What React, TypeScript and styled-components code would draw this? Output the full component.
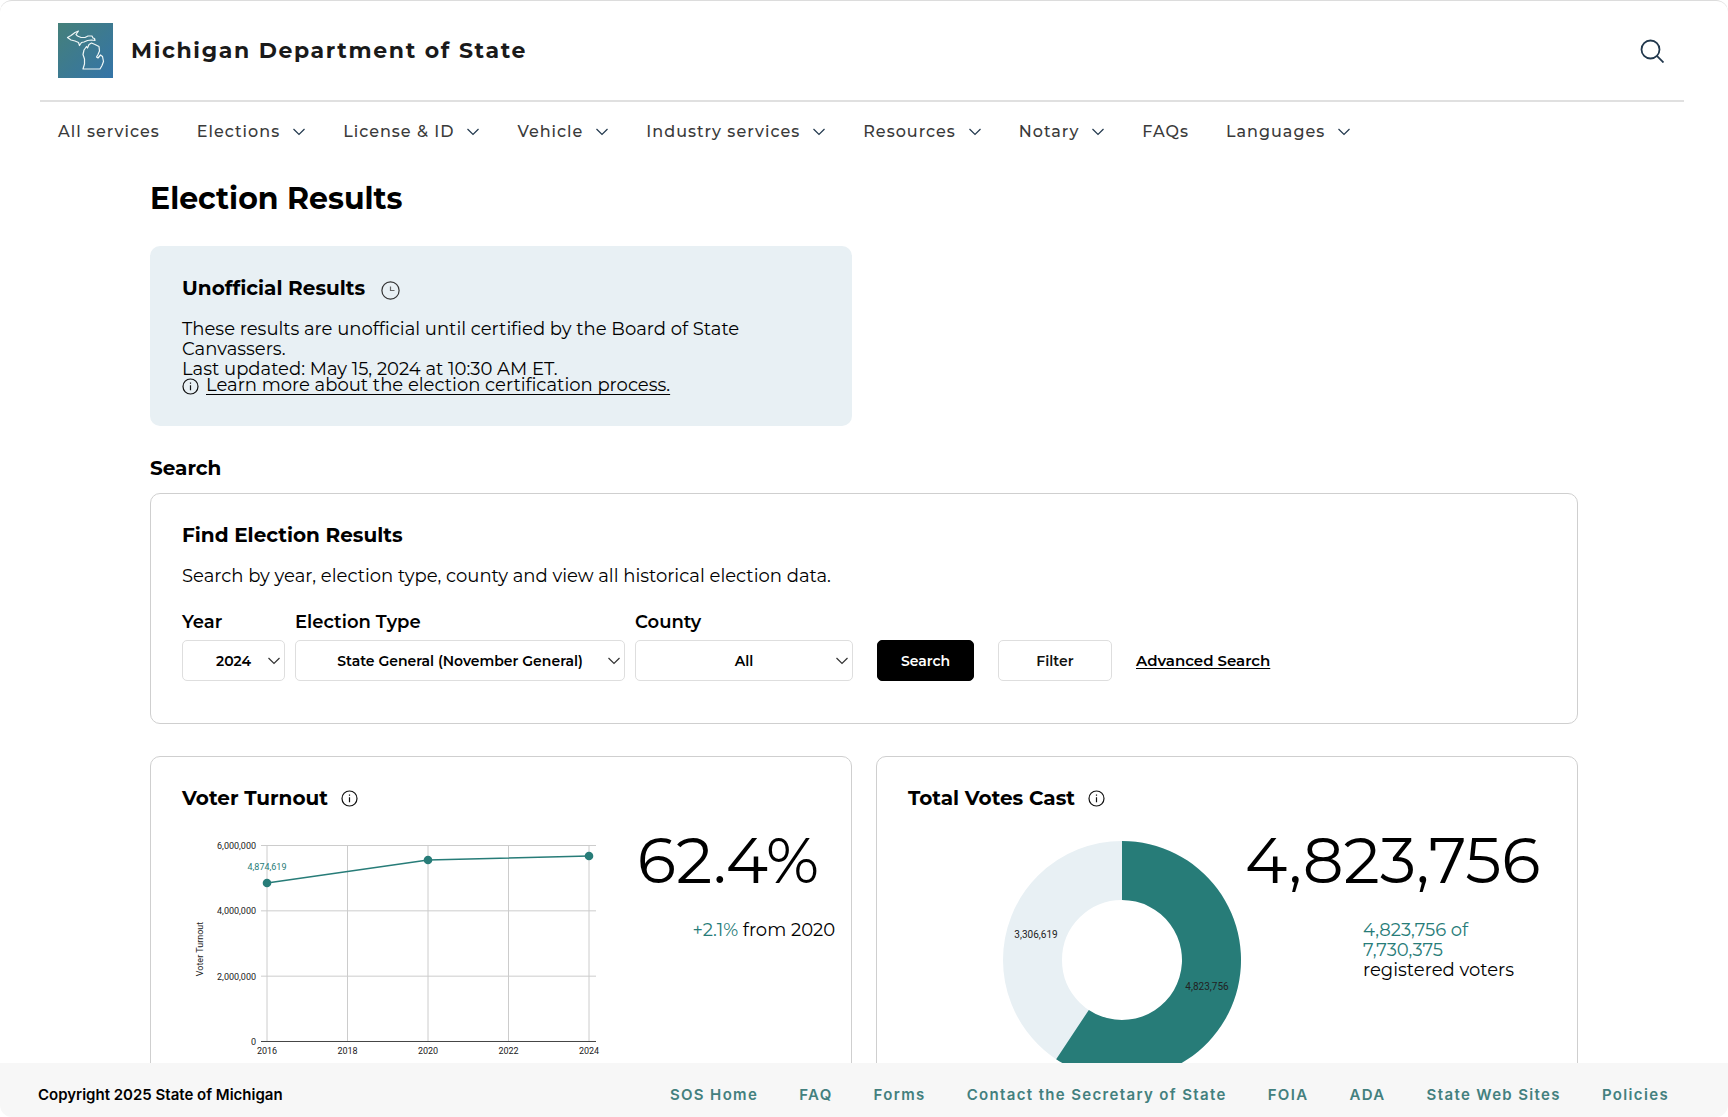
import React from 'react';
import styled, { createGlobalStyle } from 'styled-components';

const teal = '#277c78';
const heading = 'Montserrat, Inter, "Open Sans", sans-serif';

const GlobalStyle = createGlobalStyle`
  *, *::before, *::after { box-sizing: border-box; }
  body { margin: 0; background: #fff; }
  h1, h2, h3, p, ul { margin: 0; padding: 0; }
  button, select, input { font: inherit; color: inherit; }
`;

const Page = styled.div`
  display: flex;
  flex-direction: column;
  height: 100vh;
  overflow: hidden;
  border-top: 1px solid #dcdcdc;
  border-radius: 12px;
  background: #fff;
  color: #000;
  font-family: ${heading};
`;

const Scroll = styled.div`
  flex: 1;
  min-height: 0;
  overflow-y: auto;
  scrollbar-width: none;
`;

const Header = styled.header`
  margin: 0 44px 0 40px;
`;

const Brand = styled.div`
  display: flex;
  align-items: center;
  gap: 18px;
  height: 101px;
  padding: 0 20px 0 18px;
  border-bottom: 2px solid #e0e0e0;
`;

const BrandName = styled.a`
  flex: 1;
  color: #1a1a1a;
  font-size: 22px;
  font-weight: 700;
  letter-spacing: 0.075em;
  text-decoration: none;
`;

const IconButton = styled.button`
  display: flex;
  padding: 0;
  border: 0;
  background: none;
  color: #22384d;
  cursor: pointer;
`;

const Nav = styled.nav`
  display: flex;
  align-items: center;
  gap: 37px;
  height: 60px;
  padding: 0 18px;
`;

const NavItem = styled.a`
  display: flex;
  align-items: center;
  gap: 12px;
  color: #3a3a3a;
  font-size: 16px;
  font-weight: 500;
  letter-spacing: 1px;
  line-height: 20px;
  white-space: nowrap;
  text-decoration: none;
`;

const Main = styled.main`
  max-width: 1476px;
  margin: 0 auto;
  padding: 17px 24px 32px;
`;

const Title = styled.h1`
  font-size: 30px;
  font-weight: 700;
  line-height: 40px;
`;

const SectionTitle = styled.h2`
  font-size: 20px;
  font-weight: 700;
  line-height: 24px;
`;

const Columns = styled.div`
  display: grid;
  grid-template-columns: 1fr 1fr;
  gap: 24px;
`;

const Notice = styled.section`
  margin: 27px 0 30px;
  padding: 30px 32px;
  height: 180px;
  border-radius: 10px;
  background: #e8f0f4;
`;

const TitleRow = styled.div<{ $notice?: boolean }>`
  display: flex;
  align-items: ${(p) => (p.$notice ? 'flex-end' : 'center')};
  gap: ${(p) => (p.$notice ? 16 : 13)}px;
`;

const Text = styled.p`
  font-size: 18px;
  font-weight: 400;
  line-height: 20px;
`;

const NoticeText = styled(Text)`
  margin-top: 19px;
`;

const LearnMore = styled.a`
  display: flex;
  align-items: flex-start;
  gap: 7px;
  margin-top: -4px;
  color: #000;
  font-size: 18px;
  line-height: 20px;
  text-decoration: none;

  svg {
    margin-top: 3px;
  }

  span {
    text-decoration: underline;
    text-decoration-thickness: 1px;
    text-underline-offset: 3px;
  }
`;

const Card = styled.section`
  padding: 29px 31px;
  border: 1px solid #cfcfcf;
  border-radius: 10px;
  background: #fff;
`;

const SearchCard = styled(Card)`
  margin: 13px 0 32px;
  padding-bottom: 42px;
`;

const Form = styled.form`
  display: flex;
  align-items: flex-end;
  gap: 24px;
  margin-top: 26px;
`;

const Fields = styled.div`
  display: flex;
  gap: 10px;
`;

const Field = styled.div`
  display: flex;
  flex-direction: column;
  gap: 8px;
  width: ${(p: { $width: number }) => p.$width}px;

  label {
    font-size: 18px;
    font-weight: 600;
    line-height: 20px;
  }
`;

const SelectBox = styled.div`
  position: relative;

  select {
    width: 100%;
    height: 41px;
    padding: 0;
    border: 1px solid #dedede;
    border-radius: 5px;
    background: #fff;
    font-size: 14px;
    font-weight: 600;
    text-align: center;
    text-align-last: center;
    appearance: none;
  }

  svg {
    position: absolute;
    right: 4px;
    top: 17px;
    pointer-events: none;
  }
`;

const Button = styled.button<{ $primary?: boolean }>`
  height: 41px;
  width: ${(p) => (p.$primary ? 97 : 114)}px;
  padding: 0;
  border: 1px solid ${(p) => (p.$primary ? '#000' : '#dedede')};
  border-radius: 5px;
  background: ${(p) => (p.$primary ? '#000' : '#fff')};
  color: ${(p) => (p.$primary ? '#fff' : '#111')};
  font-size: 14px;
  font-weight: 600;
  cursor: pointer;
`;

const Advanced = styled.a`
  color: #000;
  font-size: 15px;
  font-weight: 600;
  line-height: 41px;
  text-underline-offset: 2px;
  text-decoration-thickness: 1px;
`;

const ChartCard = styled(Card)`
  height: 400px;
`;

const ChartRow = styled.div`
  display: flex;
  align-items: flex-start;
  margin-top: 11px;
`;

const Figures = styled.div`
  display: flex;
  flex-direction: column;
  align-items: ${(p: { $end?: boolean }) => (p.$end ? 'flex-end' : 'flex-start')};
`;

const Big = styled.strong`
  font-size: 64px;
  font-weight: 400;
  line-height: 78px;
  white-space: nowrap;
`;

const Delta = styled(Text)`
  margin: 21px -16px 0 0;
  white-space: nowrap;
`;

const Registered = styled(Text)`
  width: 160px;
  margin: 21px 0 0 118px;
`;

const Accent = styled.span`
  color: ${teal};
`;

const ChartSvg = styled.svg`
  display: block;
  flex: none;
  font-family: Roboto, sans-serif;
  font-size: 9px;
  fill: #222;
`;

const TurnoutSlot = styled.div`
  padding: 16px 25px 0 0;
`;

const DonutSlot = styled.div`
  padding: 19px 3px 0 94px;
`;

const Footer = styled.footer`
  display: flex;
  align-items: center;
  justify-content: space-between;
  height: 54px;
  padding: 8px 59px 0 38px;
  background: #f7f7f7;
  font-family: Inter, sans-serif;
  font-size: 15px;
  font-weight: 600;
`;

const FooterLinks = styled.nav`
  display: flex;
  gap: 41px;

  a {
    color: #43807e;
    letter-spacing: 0.09em;
    text-decoration: none;
    white-space: nowrap;
  }
`;

const Chevron = ({ color = '#22384d' }: { color?: string }) => (
  <svg width="14" height="8" viewBox="0 0 14 8" fill="none" stroke={color} strokeWidth="1.2" aria-hidden="true">
    <path d="M1.5 1L7 6.5 12.5 1" />
  </svg>
);

const InfoIcon = () => (
  <svg width="17" height="17" viewBox="0 0 17 17" fill="none" stroke="#111" aria-hidden="true">
    <circle cx="8.5" cy="8.5" r="7.5" strokeWidth="1.2" />
    <path d="M8.5 7.3v5M8.5 4.4v1.4" strokeWidth="1.2" />
  </svg>
);

const ClockIcon = () => (
  <svg width="19" height="19" viewBox="0 0 19 19" fill="none" stroke="#333" aria-hidden="true">
    <circle cx="9.5" cy="9.5" r="8.6" strokeWidth="1.2" />
    <path d="M9.5 5.5v4h4" stroke="#666" strokeWidth="1.2" />
  </svg>
);

const Logo = () => (
  <svg width="55" height="55" viewBox="0 0 55 55" aria-hidden="true">
    <defs>
      <linearGradient id="brand" x1="0" y1="0" x2="1" y2="1">
        <stop offset="0" stopColor="#45807a" />
        <stop offset="1" stopColor="#3474a8" />
      </linearGradient>
    </defs>
    <rect width="55" height="55" fill="url(#brand)" />
    <g fill="none" stroke="#eef6f6" strokeWidth="1.2" strokeLinejoin="round">
      <path d="M9.5 14.5L13 12.5 17 9.5 20.5 8 18 11.5 19.5 13 23 14.5 27 14.5 30 13 34 13 35 15 36.5 15.5 37 17.5 33.5 17 29.5 17.5 26 19 23.5 19.5 21.5 22.5 20.5 19.5 17 18 13 17Z" />
      <path d="M33.5 20L37 21.5 41 23.5 41.5 28 40 31.5 38.5 34 40 35 42.5 32 44.5 33.5 45.5 38.5 44 42.5 42 46 34 46 25 46 26.5 41 26.5 36 25 31.5 26 27 28.5 23.5 29.5 25 31 21.5Z" />
    </g>
  </svg>
);

const SearchIcon = () => (
  <svg width="24" height="24" viewBox="0 0 24 24" fill="none" stroke="currentColor" strokeWidth="1.8" aria-hidden="true">
    <circle cx="10.5" cy="10.5" r="9" />
    <path d="M16.9 16.9L23.5 23.5" />
  </svg>
);

const navItems: [string, boolean][] = [
  ['All services', false],
  ['Elections', true],
  ['License & ID', true],
  ['Vehicle', true],
  ['Industry services', true],
  ['Resources', true],
  ['Notary', true],
  ['FAQs', false],
  ['Languages', true],
];

const fields = [
  { id: 'year', label: 'Year', value: '2024', width: 103 },
  { id: 'type', label: 'Election Type', value: 'State General (November General)', width: 330 },
  { id: 'county', label: 'County', value: 'All', width: 218 },
];

const footerLinks = ['SOS Home', 'FAQ', 'Forms', 'Contact the Secretary of State', 'FOIA', 'ADA', 'State Web Sites', 'Policies'];

const yTicks = ['6,000,000', '4,000,000', '2,000,000', '0'];
const xTicks = ['2016', '2018', '2020', '2022', '2024'];
const turnout = [
  [85, 46],
  [246, 23],
  [407, 19],
];

const TurnoutChart = () => (
  <ChartSvg width="430" height="230" viewBox="0 0 430 230" role="img" aria-label="Voter Turnout">
    {yTicks.map((t, i) => (
      <g key={t}>
        <line x1="79" x2="414" y1={8.5 + i * 65.33} y2={8.5 + i * 65.33} stroke={i === 3 ? '#444' : '#ccc'} />
        <text x="74" y={12 + i * 65.33} textAnchor="end">{t}</text>
      </g>
    ))}
    {xTicks.map((t, i) => (
      <g key={t}>
        <line x1={85 + i * 80.5} x2={85 + i * 80.5} y1="8" y2="204" stroke="#ccc" />
        <text x={85 + i * 80.5} y="217" textAnchor="middle">{t}</text>
      </g>
    ))}
    <polyline points={turnout.map((p) => p.join(',')).join(' ')} fill="none" stroke={teal} strokeWidth="1.5" />
    {turnout.map(([x, y]) => (
      <circle key={x} cx={x} cy={y} r="4.3" fill={teal} />
    ))}
    <text x="85" y="33" textAnchor="middle" fill={teal}>4,874,619</text>
    <text transform="translate(21 112) rotate(-90)" textAnchor="middle">Voter Turnout</text>
  </ChartSvg>
);

const arc = (fraction: number, r: number) => {
  const a = fraction * Math.PI * 2;
  return `${120 + r * Math.sin(a)} ${120 - r * Math.cos(a)}`;
};
const cast = 4823756 / (4823756 + 3306619);

const VotesChart = () => (
  <ChartSvg width="240" height="240" viewBox="0 0 240 240" role="img" aria-label="Total Votes Cast">
    <circle cx="120" cy="120" r="89.5" fill="none" stroke="#e8f0f4" strokeWidth="59" />
    <path
      d={`M${arc(0, 119)}A119 119 0 1 1 ${arc(cast, 119)}L${arc(cast, 60)}A60 60 0 1 0 ${arc(0, 60)}Z`}
      fill={teal}
    />
    <text x="34" y="98" textAnchor="middle" fontSize="10">3,306,619</text>
    <text x="205" y="150" textAnchor="middle" fontSize="10">4,823,756</text>
  </ChartSvg>
);

export default function App() {
  return (
    <Page>
      <GlobalStyle />
      <Scroll>
        <Header>
          <Brand>
            <Logo />
            <BrandName href="#">Michigan Department of State</BrandName>
            <IconButton aria-label="Search site"><SearchIcon /></IconButton>
          </Brand>
          <Nav>
            {navItems.map(([name, menu]) => (
              <NavItem href="#" key={name}>
                {name}
                {menu && <Chevron />}
              </NavItem>
            ))}
          </Nav>
        </Header>
        <Main>
          <Title>Election Results</Title>
          <Columns>
            <Notice>
              <TitleRow $notice>
                <SectionTitle>Unofficial Results</SectionTitle>
                <ClockIcon />
              </TitleRow>
              <NoticeText>
                These results are unofficial until certified by the Board of State
                <br />
                Canvassers.
                <br />
                Last updated: May 15, 2024 at 10:30 AM ET.
              </NoticeText>
              <LearnMore href="#">
                <InfoIcon />
                <span>Learn more about the election certification process.</span>
              </LearnMore>
            </Notice>
          </Columns>
          <SectionTitle>Search</SectionTitle>
          <SearchCard>
            <SectionTitle>Find Election Results</SectionTitle>
            <NoticeText>Search by year, election type, county and view all historical election data.</NoticeText>
            <Form onSubmit={(e) => e.preventDefault()}>
              <Fields>
                {fields.map((f) => (
                  <Field key={f.id} $width={f.width}>
                    <label htmlFor={f.id}>{f.label}</label>
                    <SelectBox>
                      <select id={f.id}><option>{f.value}</option></select>
                      <Chevron color="#333" />
                    </SelectBox>
                  </Field>
                ))}
              </Fields>
              <Button $primary type="submit">Search</Button>
              <Button type="button">Filter</Button>
              <Advanced href="#">Advanced Search</Advanced>
            </Form>
          </SearchCard>
          <Columns>
            <ChartCard>
              <TitleRow>
                <SectionTitle>Voter Turnout</SectionTitle>
                <InfoIcon />
              </TitleRow>
              <ChartRow>
                <TurnoutSlot><TurnoutChart /></TurnoutSlot>
                <Figures $end>
                  <Big>62.4%</Big>
                  <Delta><Accent>+2.1%</Accent> from 2020</Delta>
                </Figures>
              </ChartRow>
            </ChartCard>
            <ChartCard>
              <TitleRow>
                <SectionTitle>Total Votes Cast</SectionTitle>
                <InfoIcon />
              </TitleRow>
              <ChartRow>
                <DonutSlot><VotesChart /></DonutSlot>
                <Figures>
                  <Big>4,823,756</Big>
                  <Registered>
                    <Accent>4,823,756 of<br />7,730,375</Accent>
                    <br />
                    registered voters
                  </Registered>
                </Figures>
              </ChartRow>
            </ChartCard>
          </Columns>
        </Main>
      </Scroll>
      <Footer>
        <span>Copyright 2025 State of Michigan</span>
        <FooterLinks>
          {footerLinks.map((l) => (
            <a href="#" key={l}>{l}</a>
          ))}
        </FooterLinks>
      </Footer>
    </Page>
  );
}
